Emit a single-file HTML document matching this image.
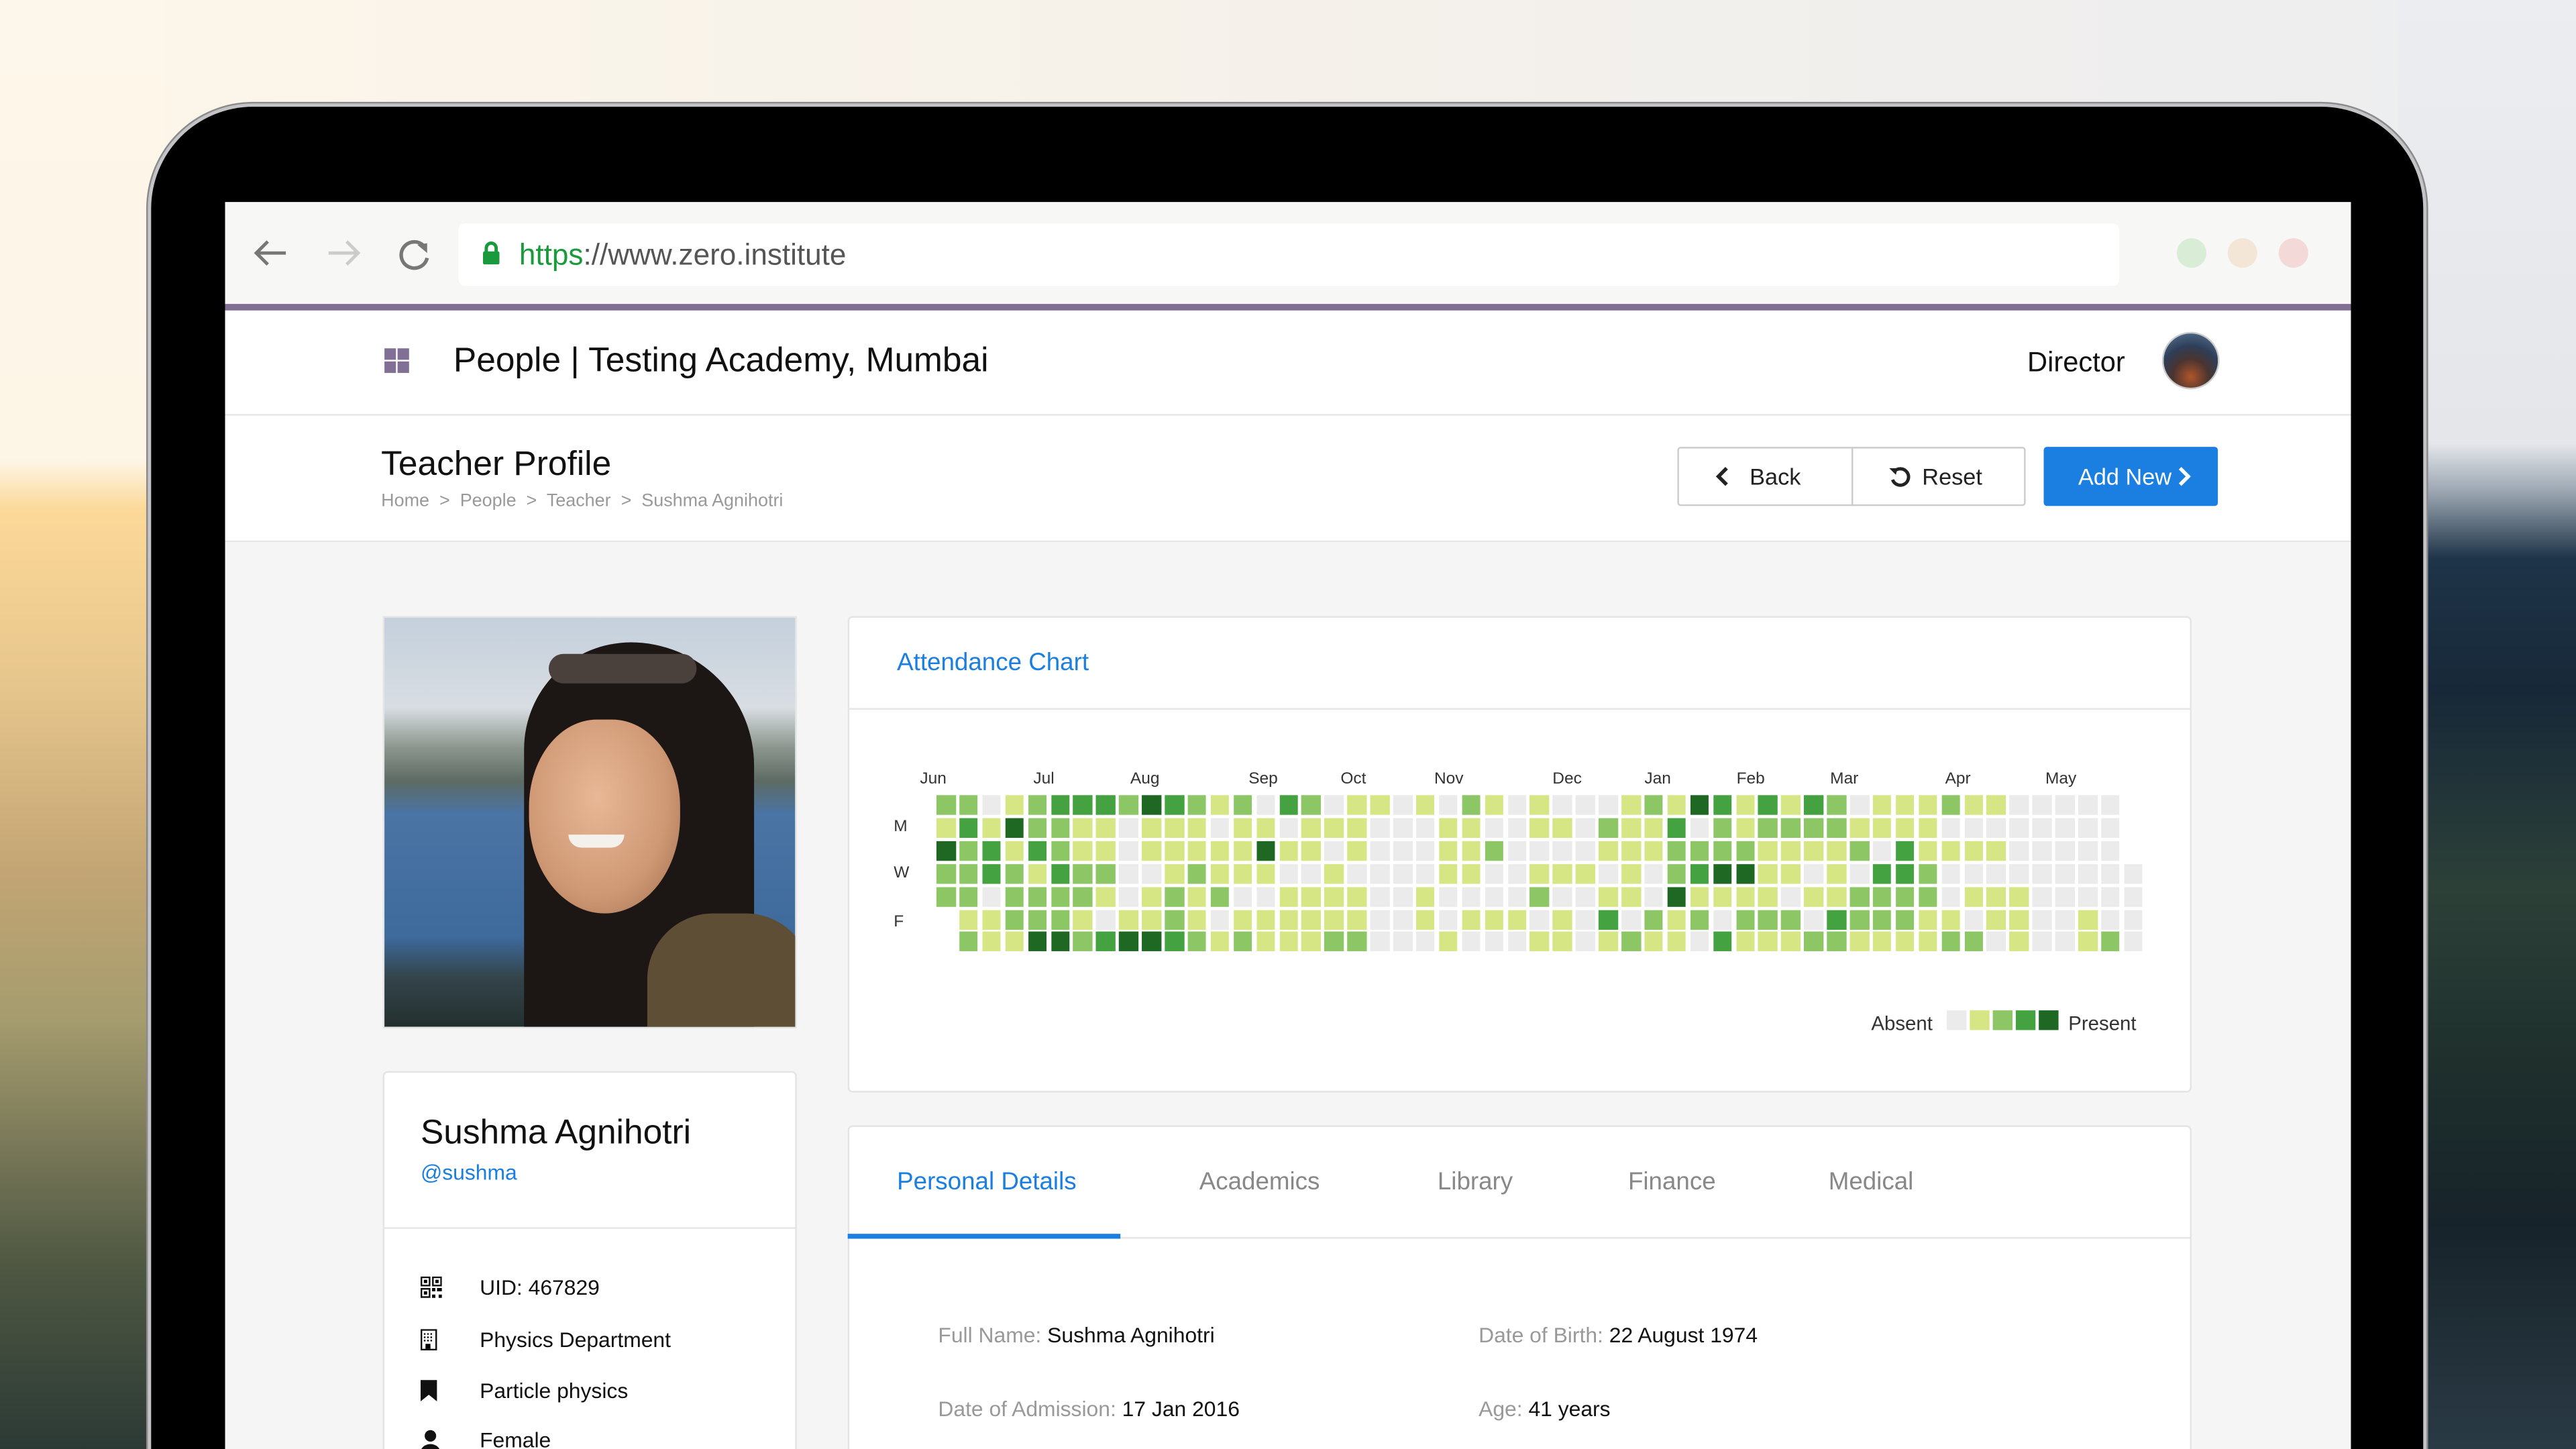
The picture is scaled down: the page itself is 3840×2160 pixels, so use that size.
<!DOCTYPE html>
<html><head><meta charset="utf-8">
<style>
*{margin:0;padding:0;box-sizing:border-box}
html,body{width:3840px;height:2160px;overflow:hidden;font-family:"Liberation Sans",sans-serif}
#wrap{position:absolute;left:0;top:0;width:1568px;height:882px;transform:scale(2.44898);transform-origin:0 0;overflow:hidden;
background:linear-gradient(90deg,#fdf6ea 0%,#f5f1ea 50%,#ecedf0 100%)}
.abs{position:absolute}
#laptop{left:92px;top:65px;width:1383px;height:817px;background:#000;border-radius:62px 62px 0 0;box-shadow:0 0 0 2px #c4c4c8,0 0 0 3px #8a8a8a}
#screen{left:137px;top:123px;width:1294px;height:759px;background:#f5f5f5;overflow:hidden}
.card{background:#fff;border:1px solid #e4e4e4;border-radius:3px}
.cell{position:absolute;width:11.5px;height:12px}
.mo{position:absolute;top:469px;font-size:10px;color:#333}
.ic{position:absolute;left:256px}
.it{position:absolute;left:292px;font-size:13px;color:#111}
.tab{position:absolute;top:711px;font-size:15px;color:#888}
.lbl{color:#999}
</style></head><body>
<div id="wrap">
<div class="abs" style="left:0;top:0;width:100px;height:882px;background:linear-gradient(180deg,#fdf6ea 0px,#fdf5e6 280px,#fcd999 310px,#e6c58c 420px,#c3a574 530px,#a59c6e 620px,#6c6e52 720px,#4f5842 770px,#2c3a36 882px)"></div>
<div class="abs" style="left:1460px;top:0;width:108px;height:882px;background:linear-gradient(180deg,#ecedf0 0px,#e4e6ea 270px,#9aa4b0 300px,#1e3448 340px,#172838 420px,#2c4038 540px,#1e2f2c 650px,#17232a 745px,#2a3a44 882px)"></div>
<div class="abs" id="laptop"></div>
<div class="abs" id="screen"></div>
<!-- browser bar -->
<div class="abs" style="left:137px;top:123px;width:1294px;height:62px;background:#f7f7f5"></div>
<svg class="abs" style="left:150px;top:142px" width="120" height="26" viewBox="0 0 120 26">
<path d="M24 12H6M13 5l-7 7 7 7" stroke="#777" stroke-width="2" fill="none"/>
<path d="M50 12h18M61 5l7 7-7 7" stroke="#ccc" stroke-width="2" fill="none"/>
<path d="M109 9a8 8 0 1 0 1 6" stroke="#777" stroke-width="2.2" fill="none"/><path d="M104 7l6 -1 0 6z" fill="#777"/>
</svg>
<div class="abs" style="left:279px;top:136px;width:1011px;height:38px;background:#fff;border-radius:4px"></div>
<svg class="abs" style="left:293px;top:147px" width="12" height="14"><rect x="1" y="6" width="10" height="8" rx="1" fill="#1a9a3c"/><path d="M3 7V4a3 3 0 0 1 6 0v3" stroke="#1a9a3c" stroke-width="2" fill="none"/></svg>
<div class="abs" style="left:316px;top:145px;font-size:18px;color:#555"><span style="color:#1a9a3c">https</span>://www.zero.institute</div>
<div class="abs" style="left:1325px;top:145px;width:18px;height:18px;border-radius:50%;background:#d9ecd6"></div>
<div class="abs" style="left:1356px;top:145px;width:18px;height:18px;border-radius:50%;background:#f4e6d6"></div>
<div class="abs" style="left:1387px;top:145px;width:18px;height:18px;border-radius:50%;background:#f4d9d9"></div>
<div class="abs" style="left:137px;top:185px;width:1294px;height:4px;background:#816f95"></div>
<!-- header -->
<div class="abs" style="left:137px;top:189px;width:1294px;height:141px;background:#fff"></div>
<div class="abs" style="left:137px;top:252px;width:1294px;height:1px;background:#e6e6e6"></div>
<div class="abs" style="left:137px;top:329px;width:1294px;height:1px;background:#e6e6e6"></div>
<svg class="abs" style="left:234px;top:212px" width="16" height="16"><rect x="0" y="0" width="7" height="7" fill="#816f95"/><rect x="8" y="0" width="7" height="7" fill="#816f95"/><rect x="0" y="8" width="7" height="7" fill="#816f95"/><rect x="8" y="8" width="7" height="7" fill="#816f95"/></svg>
<div class="abs" style="left:276px;top:208px;font-size:21px;color:#111">People | Testing Academy, Mumbai</div>
<div class="abs" style="left:1234px;top:211px;font-size:17px;color:#111">Director</div>
<div class="abs" style="left:1316px;top:202px;width:35px;height:35px;border-radius:50%;background:radial-gradient(circle at 50% 80%,#b0552a 0%,#4a3430 35%,#2e3e58 60%,#5a7898 100%);border:1px solid #ccc"></div>
<div class="abs" style="left:232px;top:271px;font-size:21px;color:#111">Teacher Profile</div>
<div class="abs" style="left:232px;top:299px;font-size:11px;color:#999">Home &nbsp;&gt;&nbsp; People &nbsp;&gt;&nbsp; Teacher &nbsp;&gt;&nbsp; Sushma Agnihotri</div>
<div class="abs" style="left:1021px;top:272px;width:212px;height:36px;border:1px solid #ccc;border-radius:2px;background:#fff"></div>
<div class="abs" style="left:1127px;top:272px;width:1px;height:36px;background:#ccc"></div>
<svg class="abs" style="left:1043px;top:283px" width="12" height="14"><path d="M8 2L3 7l5 5" stroke="#222" stroke-width="2.2" fill="none"/></svg>
<div class="abs" style="left:1065px;top:282px;font-size:14px;color:#222">Back</div>
<svg class="abs" style="left:1149px;top:283px" width="14" height="14"><path d="M4 4a5 5 0 1 1-1 5" stroke="#222" stroke-width="2" fill="none"/><path d="M1 2l5 0-1 4z" fill="#222"/></svg>
<div class="abs" style="left:1170px;top:282px;font-size:14px;color:#222">Reset</div>
<div class="abs" style="left:1244px;top:272px;width:106px;height:36px;background:#1a7fe0;border-radius:2px"></div>
<div class="abs" style="left:1265px;top:282px;font-size:14px;color:#fff">Add New</div>
<svg class="abs" style="left:1325px;top:283px" width="10" height="14"><path d="M2 2l5 5-5 5" stroke="#fff" stroke-width="2.2" fill="none"/></svg>
<!-- photo -->
<div class="abs" style="left:233px;top:375px;width:252px;height:251px;overflow:hidden;border:1px solid #e4e4e4;background:linear-gradient(180deg,#c4d0dc 0%,#d8dde2 22%,#8a948c 32%,#5d6b64 40%,#4a74a4 48%,#3e6a9c 78%,#33444a 88%,#24302e 100%)">
 <div class="abs" style="left:85px;top:15px;width:140px;height:260px;border-radius:65px 75px 0 0;background:#1c1614"></div>
 <div class="abs" style="left:88px;top:62px;width:92px;height:118px;border-radius:45% 45% 50% 50%;background:radial-gradient(ellipse at 45% 40%,#e8b896 0%,#cf9874 60%,#9a6a4c 100%)"></div>
 <div class="abs" style="left:100px;top:22px;width:90px;height:18px;border-radius:9px;background:#4a403c"></div>
 <div class="abs" style="left:160px;top:180px;width:100px;height:80px;border-radius:40px 40px 0 0;background:#5e4e36"></div>
 <div class="abs" style="left:112px;top:132px;width:34px;height:8px;border-radius:0 0 16px 16px;background:#f4f0ec"></div>
</div>
<!-- name card -->
<div class="abs card" style="left:233px;top:652px;width:252px;height:240px"></div>
<div class="abs" style="left:233px;top:747px;width:252px;height:1px;background:#e6e6e6"></div>
<div class="abs" style="left:256px;top:678px;font-size:21px;color:#111">Sushma Agnihotri</div>
<div class="abs" style="left:256px;top:706px;font-size:13px;color:#1a7fe0">@sushma</div>
<svg class="ic" style="top:777px" width="13" height="14"><path d="M0.5 0.5h5v5h-5zM7.5 0.5h5v5h-5zM0.5 7.5h5v5h-5z" stroke="#111" fill="none"/><rect x="2" y="2" width="2" height="2"/><rect x="9" y="2" width="2" height="2"/><rect x="2" y="9" width="2" height="2"/><rect x="7" y="7" width="2" height="2"/><rect x="10" y="7" width="3" height="2"/><rect x="7" y="11" width="2" height="2"/><rect x="11" y="11" width="2" height="2"/></svg>
<div class="it" style="top:776px">UID: 467829</div>
<svg class="ic" style="top:809px" width="11" height="13"><rect x="0.5" y="0.5" width="9" height="12" stroke="#111" fill="none"/><path d="M2 3h6M2 5h6M2 7h6" stroke="#111" stroke-dasharray="1 1"/><rect x="3" y="9" width="3" height="3"/></svg>
<div class="it" style="top:808px">Physics Department</div>
<svg class="ic" style="top:840px" width="10" height="13"><path d="M0 0h10v13l-5-4-5 4z" fill="#111"/></svg>
<div class="it" style="top:839px">Particle physics</div>
<svg class="ic" style="top:870px" width="12" height="12"><circle cx="6" cy="4" r="3.5" fill="#111"/><path d="M0 14a6 5 0 0 1 12 0z" fill="#111"/></svg>
<div class="it" style="top:869px">Female</div>
<!-- attendance card -->
<div class="abs card" style="left:516px;top:375px;width:818px;height:290px"></div>
<div class="abs" style="left:516px;top:431px;width:818px;height:1px;background:#e6e6e6"></div>
<div class="abs" style="left:546px;top:395px;font-size:15px;color:#1a7fe0">Attendance Chart</div>
<div class="mo" style="left:560px">Jun</div><div class="mo" style="left:629px">Jul</div><div class="mo" style="left:688px">Aug</div><div class="mo" style="left:760px">Sep</div><div class="mo" style="left:816px">Oct</div><div class="mo" style="left:873px">Nov</div><div class="mo" style="left:945px">Dec</div><div class="mo" style="left:1001px">Jan</div><div class="mo" style="left:1057px">Feb</div><div class="mo" style="left:1114px">Mar</div><div class="mo" style="left:1184px">Apr</div><div class="mo" style="left:1245px">May</div>
<div class="abs" style="left:544px;top:498px;font-size:10px;color:#333">M</div>
<div class="abs" style="left:544px;top:526px;font-size:10px;color:#333">W</div>
<div class="abs" style="left:544px;top:556px;font-size:10px;color:#333">F</div>
<div id="grid"></div>
<div class="abs" style="left:1139px;top:616px;font-size:12px;color:#333">Absent</div>
<div class="cell" style="left:1185px;top:615px;background:#ebebeb"></div>
<div class="cell" style="left:1199px;top:615px;background:#d6e685"></div>
<div class="cell" style="left:1213px;top:615px;background:#8cc665"></div>
<div class="cell" style="left:1227px;top:615px;background:#44a340"></div>
<div class="cell" style="left:1241px;top:615px;background:#1e6823"></div>
<div class="abs" style="left:1259px;top:616px;font-size:12px;color:#333">Present</div>
<!-- tabs card -->
<div class="abs card" style="left:516px;top:685px;width:818px;height:205px"></div>
<div class="abs" style="left:516px;top:753px;width:818px;height:1px;background:#e6e6e6"></div>
<div class="abs" style="left:516px;top:751px;width:166px;height:3px;background:#1a7fe0"></div>
<div class="tab" style="left:546px;color:#1a7fe0">Personal Details</div>
<div class="tab" style="left:730px">Academics</div>
<div class="tab" style="left:875px">Library</div>
<div class="tab" style="left:991px">Finance</div>
<div class="tab" style="left:1113px">Medical</div>
<div class="abs" style="left:571px;top:805px;font-size:13px;color:#111"><span class="lbl">Full Name:</span> Sushma Agnihotri</div>
<div class="abs" style="left:900px;top:805px;font-size:13px;color:#111"><span class="lbl">Date of Birth:</span> 22 August 1974</div>
<div class="abs" style="left:571px;top:850px;font-size:13px;color:#111"><span class="lbl">Date of Admission:</span> 17 Jan 2016</div>
<div class="abs" style="left:900px;top:850px;font-size:13px;color:#111"><span class="lbl">Age:</span> 41 years</div>
</div>
<script>
var R=[
"2201233324321203201101021010001214313132011121100000",
"1314221101110110111000110011021130212222111100000000",
"4231321101111141101000112000011122221111203111100000",
"22321322001211100100001100111010234411010332000000000",
"22022221012120011110010000200110411110112222011100000",
"x1122210112101111110010111010302120222032221101100100",
"x2114423443212111220001000110121103111221111220100120"];
var C=["#ebebeb","#d6e685","#8cc665","#44a340","#1e6823"],h="";
for(var r=0;r<7;r++){var s=R[r];for(var c=0;c<s.length&&c<53;c++){var v=s[c];if(v=="x")continue;
h+='<div class="cell" style="left:'+(570+c*13.9).toFixed(1)+'px;top:'+(484+r*13.9).toFixed(1)+'px;background:'+C[+v]+'"></div>';}}
document.getElementById("grid").innerHTML=h;
</script>
</body></html>
